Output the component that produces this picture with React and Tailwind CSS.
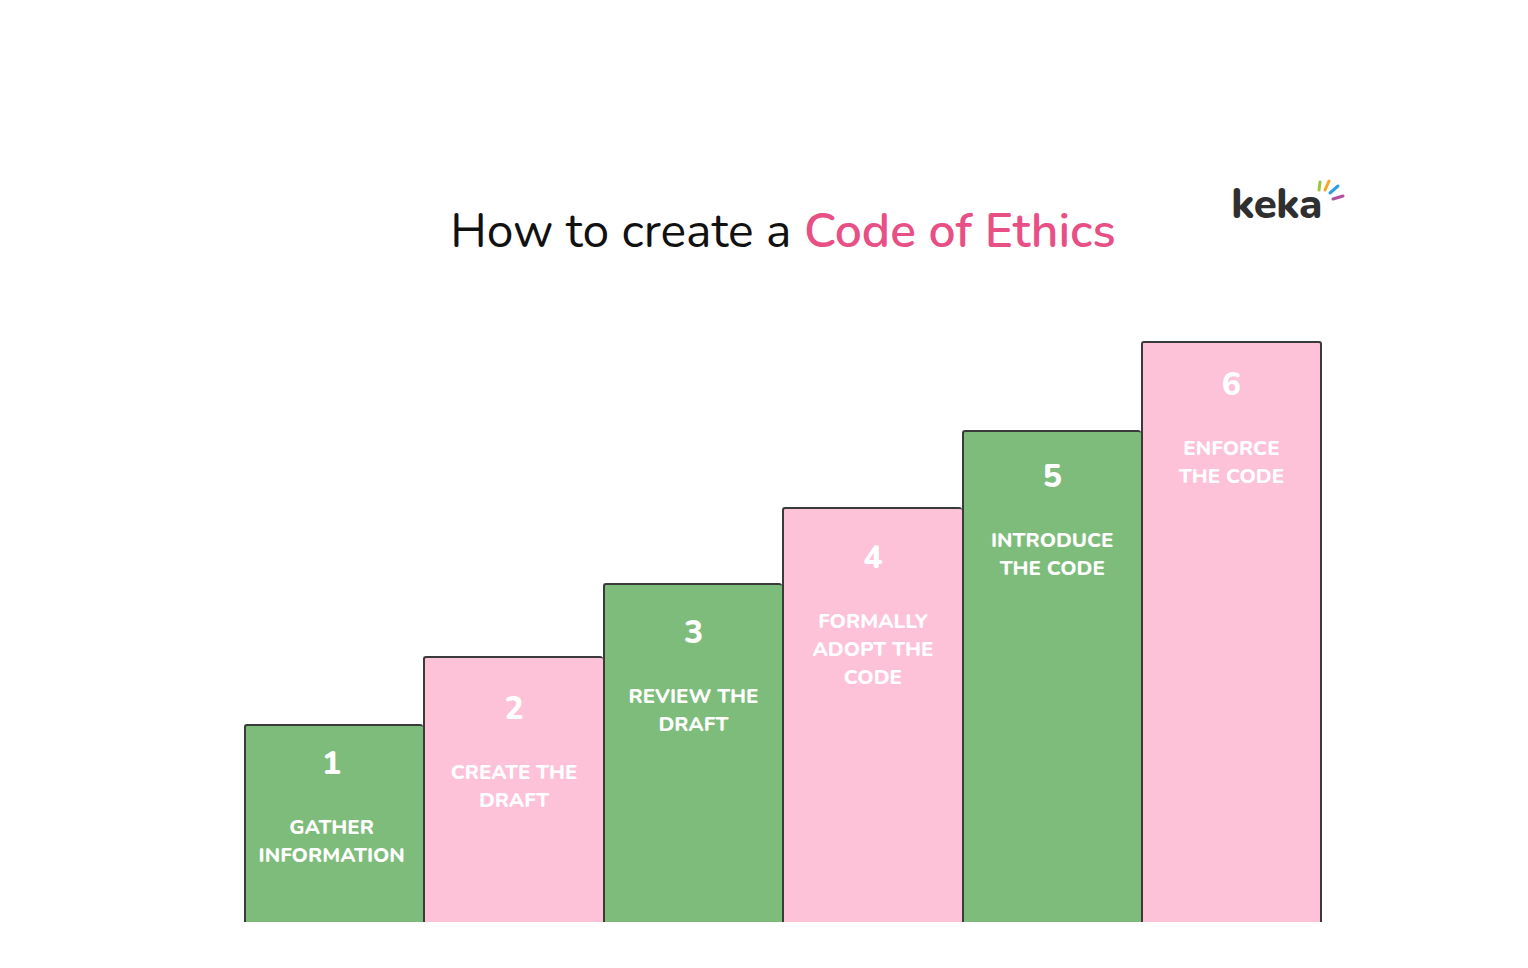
const steps = [
  { n: '1', label: ['GATHER', 'INFORMATION'], h: 'h-[198px]', pt: 'pt-[18px]', bg: 'bg-[#7dbc7a]' },
  { n: '2', label: ['CREATE THE', 'DRAFT'], h: 'h-[266px]', pt: 'pt-[31px]', bg: 'bg-[#fdc2d8]' },
  { n: '3', label: ['REVIEW THE', 'DRAFT'], h: 'h-[339px]', pt: 'pt-[28px]', bg: 'bg-[#7dbc7a]' },
  { n: '4', label: ['FORMALLY', 'ADOPT THE', 'CODE'], h: 'h-[415px]', pt: 'pt-[29px]', bg: 'bg-[#fdc2d8]' },
  { n: '5', label: ['INTRODUCE', 'THE CODE'], h: 'h-[492px]', pt: 'pt-[25px]', bg: 'bg-[#7dbc7a]' },
  { n: '6', label: ['ENFORCE', 'THE CODE'], h: 'h-[581px]', pt: 'pt-[22px]', bg: 'bg-[#fdc2d8]' },
];

function KekaLogo() {
  return (
    <div className="flex items-start">
      <span className="text-[42px] leading-none font-extrabold tracking-[-0.5px] text-[#2f2f2f] mt-[6px]">
        keka
      </span>
      <svg width="30" height="28" viewBox="0 0 30 28" className="-ml-[6px]">
        <g strokeLinecap="round" strokeWidth="3" fill="none">
          <line x1="4" y1="4" x2="3" y2="12" stroke="#9bc53d" />
          <line x1="13" y1="3" x2="9" y2="12" stroke="#f5a623" />
          <line x1="22" y1="8" x2="14" y2="15" stroke="#2f9fe0" />
          <line x1="27" y1="18" x2="17" y2="21" stroke="#b04fa0" />
        </g>
      </svg>
    </div>
  );
}

export default function App() {
  return (
    <div className="h-[968px] bg-white font-['Nunito','Noto_Sans',sans-serif]">
      <div className="w-[1078px] ml-[244px] pt-[178px]">
        {/* Header */}
        <div className="grid grid-cols-[1fr_auto_1fr] items-start">
          <div />
          <h1 className="text-[48px] leading-[56px] mt-[25px] text-[#111] whitespace-nowrap font-normal">
            How to create a <span className="text-[#e84f84] font-semibold">Code of Ethics</span>
          </h1>
          <div className="justify-self-end -mr-[24px]">
            <KekaLogo />
          </div>
        </div>

        {/* Steps */}
        <div className="flex items-end h-[581px] mt-[82px]">
          {steps.map((s, i) => (
            <div
              key={s.n}
              className={`shrink-0 ${s.h} ${s.pt} ${s.bg} border-t-2 border-l-2 border-[#3a3a3a] rounded-t-[3px] ${
                i === steps.length - 1 ? 'w-[181px] border-r-2' : 'w-[179.4px]'
              } ${i === 0 ? 'pr-[6px]' : ''} flex flex-col items-center text-white`}
            >
              <div className="text-[32px] leading-[40px] font-extrabold">{s.n}</div>
              <div className="mt-[29px] text-[20.5px] leading-[28px] font-extrabold text-center">
                {s.label.map((l) => (
                  <div key={l}>{l}</div>
                ))}
              </div>
            </div>
          ))}
        </div>
      </div>
    </div>
  );
}
